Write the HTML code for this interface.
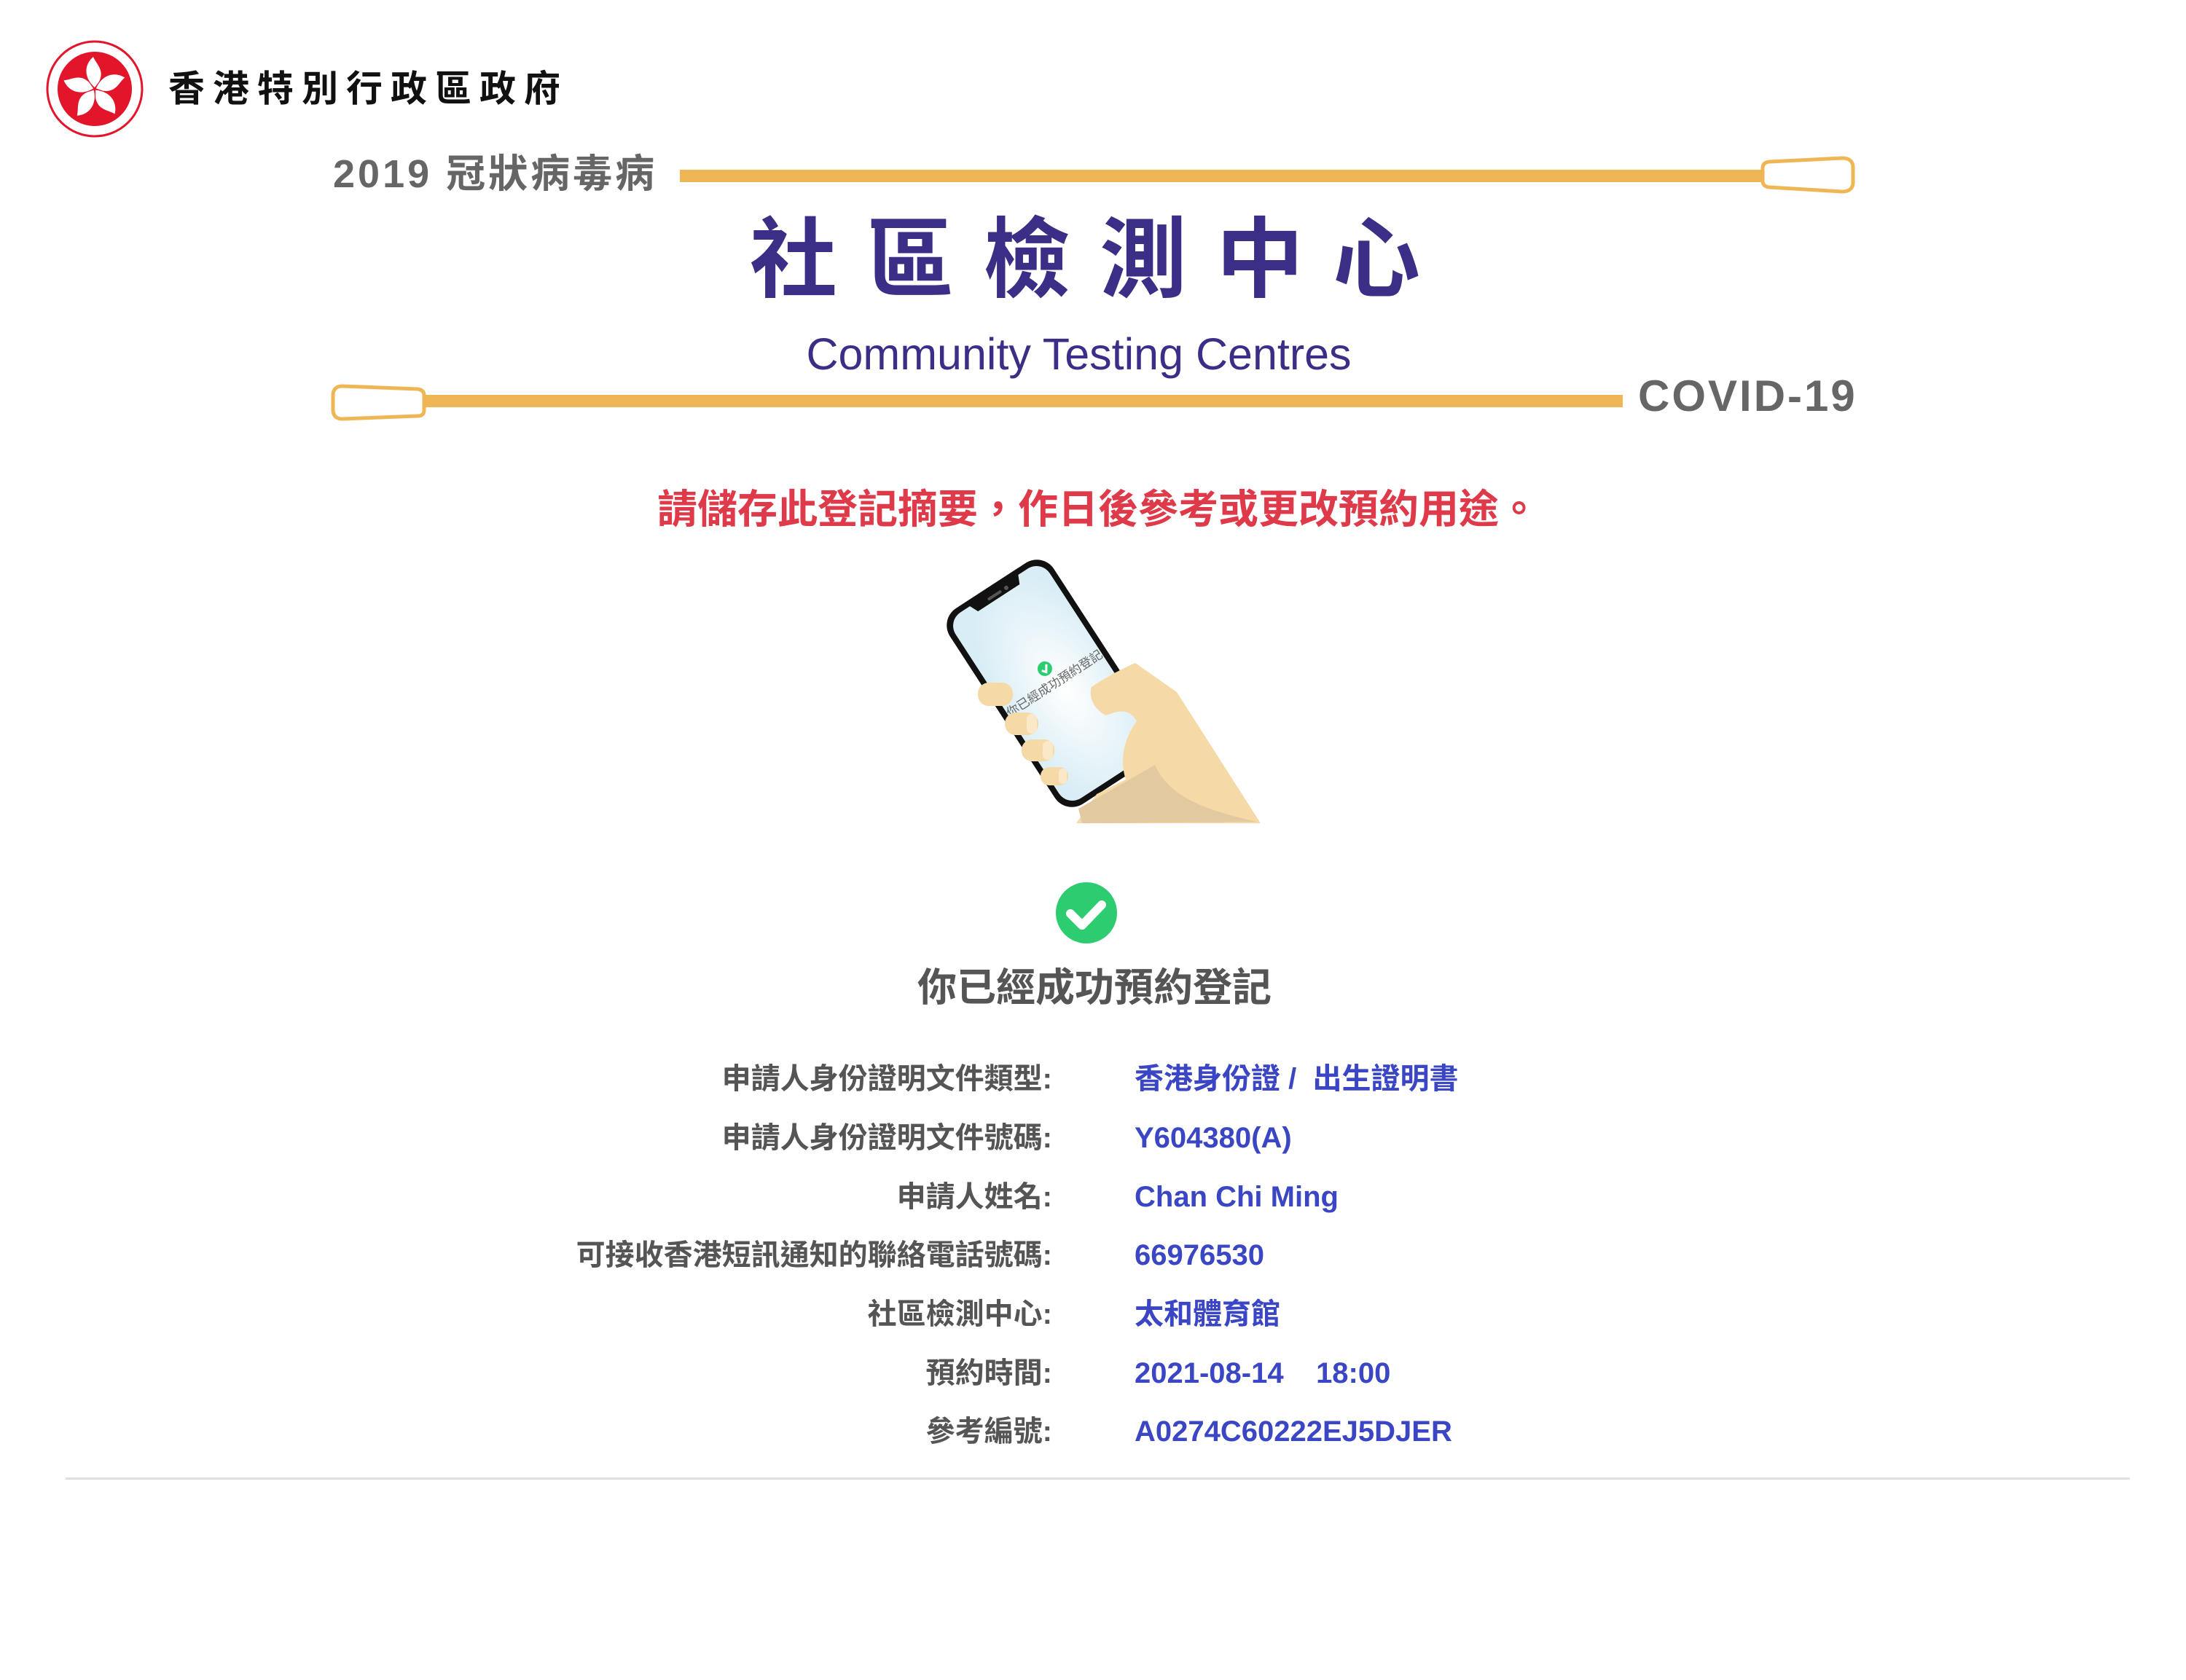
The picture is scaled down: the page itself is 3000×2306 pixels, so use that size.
<!DOCTYPE html>
<html><head><meta charset="utf-8">
<style>
html,body{margin:0;padding:0;background:#fff;}
body{width:3000px;height:2306px;position:relative;overflow:hidden;font-family:"Liberation Sans","Noto Sans CJK TC",sans-serif;}
.a{position:absolute;white-space:nowrap;}
.lbl{position:absolute;right:1556px;font-size:40px;line-height:40px;font-weight:bold;color:#555;text-align:right;white-space:nowrap;}
.val{position:absolute;left:1557px;font-size:40px;line-height:40px;font-weight:bold;color:#3a46c4;white-space:nowrap;}
</style></head><body>
<svg class="a" style="left:0;top:0" width="3000" height="2306" viewBox="0 0 3000 2306">
  <circle cx="130" cy="122" r="65" fill="#fff" stroke="#e3152b" stroke-width="3"/>
  <circle cx="130" cy="122" r="51" fill="#e3152b"/>
  <g fill="#fff" transform="translate(130,122)">
    <g id="pet"><path d="M0,-2 C-14,-14 -16,-32 -2,-44 C2,-34 14,-26 6,-10 Z"/></g>
    <use href="#pet" transform="rotate(72)"/><use href="#pet" transform="rotate(144)"/>
    <use href="#pet" transform="rotate(216)"/><use href="#pet" transform="rotate(288)"/>
  </g>
  <rect x="933" y="233" width="1488" height="17" fill="#efb656"/>
  <path d="M2428,222 L2528,217 Q2543,217 2543,230 L2543,250 Q2543,263 2528,263 L2428,257 Q2419,256 2419,248 L2419,231 Q2419,223 2428,222 Z" fill="#fff" stroke="#efb656" stroke-width="5"/>
  <rect x="583" y="542" width="1644" height="17" fill="#efb656"/>
  <path d="M470,530 L573,534 Q582,535 582,543 L582,563 Q582,571 573,571 L470,575 Q457,575 457,562 L457,543 Q457,530 470,530 Z" fill="#fff" stroke="#efb656" stroke-width="5"/>
  <defs>
    <radialGradient id="scr" cx="0.55" cy="0.55" r="0.6">
      <stop offset="0" stop-color="#ffffff"/><stop offset="1" stop-color="#d8edf5"/>
    </radialGradient>
  </defs>
  <g transform="translate(25,0)">
  <g transform="translate(1422,938) rotate(-33)">
    <rect x="-85" y="-160" width="170" height="320" rx="28" fill="#111"/>
    <rect x="-77" y="-152" width="154" height="304" rx="22" fill="url(#scr)"/>
    <path d="M-40,-153 L-34,-140 L34,-140 L40,-153 Z" fill="#111"/>
    <rect x="-14" y="-148" width="22" height="4" rx="2" fill="#555"/>
    <circle cx="16" cy="-146" r="3" fill="#555"/>
    <circle cx="0" cy="-24" r="10" fill="#2ecc71"/>
    <path d="M-5,-24 L-1,-19 L5,-28" stroke="#fff" stroke-width="3" fill="none"/>
    <text x="0" y="6" font-size="17" fill="#666" text-anchor="middle" font-family="Noto Sans CJK TC,sans-serif">你已經成功預約登記</text>
  </g>
  <path d="M1473,943 C1495,928 1515,918 1533,910 L1590,950 L1705,1130 L1452,1130 L1480,1090 L1520,1070 C1510,1040 1520,1010 1535,990 C1525,972 1510,975 1493,982 C1478,975 1468,958 1473,943 Z" fill="#f5d9a6"/>
  <path d="M1460,1130 L1455,1110 L1560,1050 C1580,1095 1630,1112 1700,1128 Z" fill="#e3c9a0"/>
  <g fill="#f5d9a6">
    <rect x="1317" y="937" width="48" height="32" rx="15"/>
    <rect x="1354" y="978" width="46" height="31" rx="15"/>
    <rect x="1377" y="1015" width="45" height="30" rx="14"/>
    <rect x="1403" y="1053" width="38" height="25" rx="12"/>
  </g>
  <g fill="#fbe8c8">
    <rect x="1384" y="980" width="14" height="27" rx="7"/>
    <rect x="1406" y="1017" width="14" height="26" rx="7"/>
    <rect x="1428" y="1055" width="11" height="21" rx="5"/>
  </g>
  </g>
  <circle cx="1491" cy="1253" r="42" fill="#2ecc71"/>
  <path d="M1469,1254 L1485,1270 L1512,1242" stroke="#fff" stroke-width="12" stroke-linecap="round" stroke-linejoin="round" fill="none"/>
  <rect x="90" y="2028" width="2833" height="3" fill="#e0e0e0"/>
</svg>

<div class="a" style="left:231px;top:97px;font-size:50px;line-height:50px;font-weight:bold;color:#111;letter-spacing:11px;">香港特別行政區政府</div>
<div class="a" style="left:457px;top:212px;font-size:54px;line-height:54px;font-weight:bold;color:#666;letter-spacing:4px;">2019 冠狀病毒病</div>
<div class="a" style="left:1029px;top:297px;font-size:120px;line-height:120px;font-weight:bold;color:#3b2e86;letter-spacing:40px;">社區檢測中心</div>
<div class="a" style="left:1099px;top:456px;width:763px;text-align:center;font-size:61px;line-height:61px;color:#3b2e86;">Community Testing Centres</div>
<div class="a" style="left:2248px;top:514px;font-size:60px;line-height:60px;font-weight:bold;color:#666;letter-spacing:3px;">COVID-19</div>
<div class="a" style="left:902px;top:672px;font-size:55px;line-height:55px;font-weight:bold;color:#df3a4a;">請儲存此登記摘要，作日後參考或更改預約用途。</div>
<div class="a" style="left:1259px;top:1329px;font-size:54px;line-height:54px;font-weight:bold;color:#555;">你已經成功預約登記</div>

<div class="lbl" style="top:1461px">申請人身份證明文件類型:</div><div class="val" style="top:1461px">香港身份證 /&nbsp; 出生證明書</div>
<div class="lbl" style="top:1542px">申請人身份證明文件號碼:</div><div class="val" style="top:1542px">Y604380(A)</div>
<div class="lbl" style="top:1623px">申請人姓名:</div><div class="val" style="top:1623px">Chan Chi Ming</div>
<div class="lbl" style="top:1703px">可接收香港短訊通知的聯絡電話號碼:</div><div class="val" style="top:1703px">66976530</div>
<div class="lbl" style="top:1784px">社區檢測中心:</div><div class="val" style="top:1784px">太和體育館</div>
<div class="lbl" style="top:1865px">預約時間:</div><div class="val" style="top:1865px">2021-08-14&nbsp;&nbsp;&nbsp; 18:00</div>
<div class="lbl" style="top:1945px">參考編號:</div><div class="val" style="top:1945px">A0274C60222EJ5DJER</div>
</body></html>
